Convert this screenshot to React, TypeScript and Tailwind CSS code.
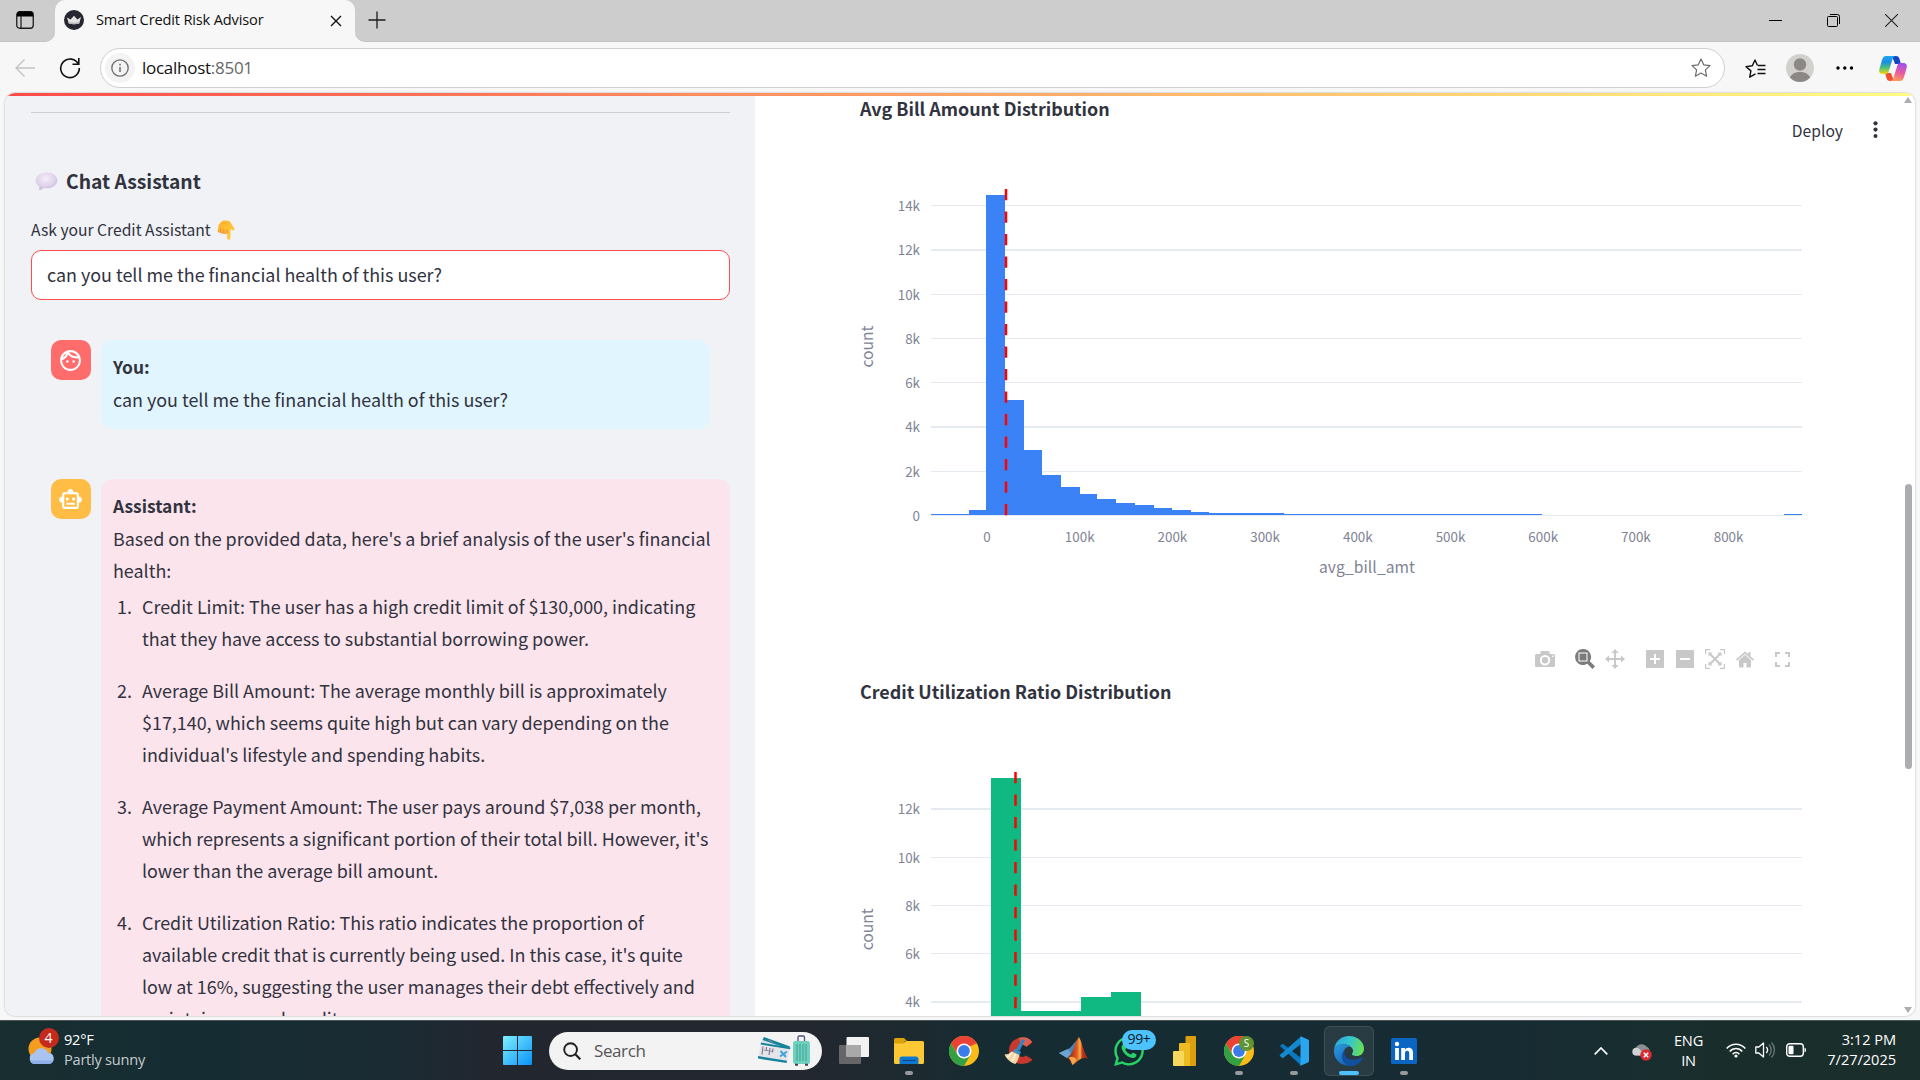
import React from "react";
import { MdOutlineFace, MdOutlineSmartToy } from "react-icons/md";
import { FaWhatsapp } from "react-icons/fa";

const ITEMS: string[][] = [
  ["Credit Limit: The user has a high credit limit of $130,000, indicating", "that they have access to substantial borrowing power."],
  ["Average Bill Amount: The average monthly bill is approximately", "$17,140, which seems quite high but can vary depending on the", "individual's lifestyle and spending habits."],
  ["Average Payment Amount: The user pays around $7,038 per month,", "which represents a significant portion of their total bill. However, it's", "lower than the average bill amount."],
  ["Credit Utilization Ratio: This ratio indicates the proportion of", "available credit that is currently being used. In this case, it's quite", "low at 16%, suggesting the user manages their debt effectively and", "maintains a good credit score."],
];

/* ---------- Browser chrome ---------- */

function TabStrip() {
  return (
    <div className="flex h-[42px] shrink-0 bg-[#f7f7f7] font-['Open_Sans',sans-serif]">
      <div className="flex w-[55px] items-center rounded-br-[10px] border-b border-[#c4c4c4] bg-[#cdcdcd] pl-4">
        <svg width="18" height="18" viewBox="0 0 18 18" className="mt-[-1px]">
          <rect x="0.75" y="0.75" width="16.5" height="16.5" rx="3" fill="#cdcdcd" stroke="#1b1b1b" strokeWidth="1.3" />
          <path d="M1 5.5V3.5a3 3 0 0 1 3-3h10a3 3 0 0 1 3 3v2z" fill="#000" />
          <path d="M5 5v12" stroke="#1b1b1b" strokeWidth="1.2" />
        </svg>
      </div>
      <div className="bg-[#cdcdcd]">
        <div className="flex h-[42px] w-[300px] items-center rounded-t-[10px] bg-[#f7f7f7] pl-[9px]">
          <svg width="20" height="20" viewBox="0 0 20 20" className="mt-[-2px]">
            <circle cx="10" cy="10" r="10" fill="#262730" />
            <path d="M3 7.5l3.6 2L10 5.8l3.4 3.7L17 7l-1.8 6.6c-3 1-7.400 1-10.400 0z" fill="#e3e3e3" />
            <path d="M4.300 11.800c3.500 1.200 8 1.200 11.400 0l-.5 1.800c-3 1-7.400 1-10.400 0z" fill="#b9b9bd" />
          </svg>
          <span className="mt-[-3px] ml-3 w-[170px] whitespace-nowrap text-[14.6px] tracking-[-0.16px] text-[#111]">Smart Credit Risk Advisor</span>
          <svg width="12" height="12" viewBox="0 0 12 12" className="mt-[-1px] ml-[64px]">
            <path d="M1 1l10 10M11 1L1 11" stroke="#111" strokeWidth="1.4" />
          </svg>
        </div>
      </div>
      <div className="flex grow items-center rounded-bl-[10px] border-b border-[#c4c4c4] bg-[#cdcdcd] pl-[13px]">
        <svg width="18" height="18" viewBox="0 0 18 18" className="mt-[-2px]">
          <path d="M9 0.500v17M0.500 9h17" stroke="#1b1b1b" strokeWidth="1.300" />
        </svg>
        <div className="ml-auto flex items-center pr-[22px]">
          <svg width="13" height="13" viewBox="0 0 13 13">
            <path d="M0 6.500h13" stroke="#000" strokeWidth="1" />
          </svg>
          <svg width="13" height="13" viewBox="0 0 13 13" className="ml-[45px]">
            <rect x="0.500" y="2.500" width="10" height="10" rx="1" fill="none" stroke="#000" />
            <path d="M3 .500h7.500a2 2 0 0 1 2 2V10" fill="none" stroke="#000" />
          </svg>
          <svg width="13" height="13" viewBox="0 0 13 13" className="ml-[45px]">
            <path d="M0 0l13 13M13 0L0 13" stroke="#222" strokeWidth="1.100" />
          </svg>
        </div>
      </div>
    </div>
  );
}

function CopilotLogo() {
  return (
    <svg width="28" height="27" viewBox="0 0 28 27">
      <defs>
        <linearGradient id="cpA" x1="0" y1="0" x2="0" y2="1">
          <stop offset="0" stopColor="#1ca8f0" />
          <stop offset="0.350" stopColor="#1b8fe0" />
          <stop offset="0.650" stopColor="#4fbf7a" />
          <stop offset="1" stopColor="#f2d713" />
        </linearGradient>
        <linearGradient id="cpB" x1="0.600" y1="0" x2="0.300" y2="1">
          <stop offset="0" stopColor="#a24ff0" />
          <stop offset="0.500" stopColor="#ea5c9c" />
          <stop offset="1" stopColor="#ffa05a" />
        </linearGradient>
      </defs>
      <path d="M13 1h4c2 0 3 1 3.500 3L22 9h-6z" fill="#1447c4" />
      <path d="M15 26h-4c-2 0-3-1-3.500-3L6 18h6z" fill="#f0502e" />
      <path d="M7 1h10c-2 0-3 1.500-3.600 3.500L10 15.500C9.300 18 8.400 19 6 19H3.500C.5 19-.3 16.800.4 14L3 5C3.800 2.300 5 1 7 1z" fill="url(#cpA)" />
      <path d="M21 26H11c2 0 3-1.500 3.600-3.500L18 11.500C18.700 9 19.600 8 22 8h2.500c3 0 3.800 2.200 3.100 5L25 22c-.8 2.700-2 4-4 4z" fill="url(#cpB)" />
    </svg>
  );
}

const STAR = "M10 1l2.700 5.800 6.300.8-4.600 4.300 1.200 6.300L10 15.100l-5.600 3.100 1.200-6.300L1 7.600l6.300-.8z";

function Toolbar() {
  return (
    <div className="flex h-[51px] shrink-0 items-start bg-[#f7f7f7] pt-[6px] font-['Open_Sans',sans-serif]">
      <svg width="20" height="18" viewBox="0 0 20 18" className="mt-[11px] ml-[15px]">
        <path d="M20 9H1M9.500 .500L1 9l8.500 8.500" fill="none" stroke="#c2c2c2" strokeWidth="1.300" />
      </svg>
      <svg width="22" height="22" viewBox="0 0 22 22" className="mt-[9px] ml-[24px]">
        <path d="M19.500 7.500A9.300 9.300 0 1 0 20.300 11" fill="none" stroke="#111" strokeWidth="1.600" />
        <path d="M19.800 1v6.300h-6.300" fill="none" stroke="#111" strokeWidth="1.600" />
      </svg>
      <div className="ml-[19px] flex h-10 w-[1625px] items-center rounded-full border border-[#cfcfcf] bg-white pr-[13px] pl-1">
        <div className="flex size-[30px] items-center justify-center rounded-full bg-[#f3f3f3]">
          <svg width="18" height="18" viewBox="0 0 18 18">
            <circle cx="9" cy="9" r="8.200" fill="none" stroke="#6b6b6b" strokeWidth="1.300" />
            <path d="M9 8v5M9 4.800v1.600" stroke="#6b6b6b" strokeWidth="1.500" />
          </svg>
        </div>
        <span className="mt-[-1px] ml-[7px] text-[17px] tracking-[-0.27px] text-[#111]">
          localhost<span className="text-[#666]">:8501</span>
        </span>
        <svg width="20" height="20" viewBox="0 0 20 20" className="ml-auto">
          <path d={STAR} fill="none" stroke="#6b6b6b" strokeWidth="1.200" strokeLinejoin="round" />
        </svg>
      </div>
      <svg width="21" height="20" viewBox="0 0 21 20" className="mt-[11px] ml-[20px]">
        <path d="M10.500 14.800l-5.800 3.400 1.200-6.300L1 7.600l6.300-.8L10 1l2.500 5.500" fill="none" stroke="#111" strokeWidth="1.400" strokeLinejoin="round" />
        <path d="M13 6.500h7.500M12.500 10.500h8M12.500 14.500h8" stroke="#111" strokeWidth="1.300" />
      </svg>
      <svg width="28" height="28" viewBox="0 0 28 28" className="mt-[6px] ml-5">
        <circle cx="14" cy="14" r="14" fill="#d3d1ce" />
        <circle cx="14" cy="10.500" r="6.200" fill="#8c8885" />
        <path d="M4 23.700c1.500-4 5.500-5.700 10-5.700s8.500 1.700 10 5.700A14 14 0 0 1 4 23.700z" fill="#8c8885" />
      </svg>
      <svg width="18" height="4" viewBox="0 0 18 4" className="mt-[18px] ml-[22px]">
        <circle cx="2" cy="2" r="1.700" />
        <circle cx="8.800" cy="2" r="1.700" />
        <circle cx="15.500" cy="2" r="1.700" />
      </svg>
      <div className="mt-[7px] ml-[25px]">
        <CopilotLogo />
      </div>
    </div>
  );
}

/* ---------- Sidebar ---------- */

function SpeechBubble() {
  return (
    <svg width="23" height="19" viewBox="0 0 23 19">
      <defs>
        <radialGradient id="bub" cx="0.450" cy="0.350" r="0.750">
          <stop offset="0" stopColor="#f3eef8" />
          <stop offset="0.600" stopColor="#ddd2ea" />
          <stop offset="1" stopColor="#b7a3d3" />
        </radialGradient>
      </defs>
      <path d="M11.500 0.500c6 0 10.800 3.500 10.800 8 0 4.300-4.800 7.800-10.800 7.800-1 0-2-.1-3-.3-1.400 1.300-3 2-4.500 2 .5-1.200.6-2.500.2-3.600C2 13 .7 10.900 .7 8.500c0-4.500 4.800-8 10.800-8z" fill="url(#bub)" />
    </svg>
  );
}

function PointDown() {
  return (
    <svg width="18" height="20" viewBox="0 0 18 20">
      <defs>
        <linearGradient id="hand" x1="0" y1="0" x2="1" y2="1">
          <stop offset="0" stopColor="#ffb02e" />
          <stop offset="1" stopColor="#ffcf3d" />
        </linearGradient>
      </defs>
      <path d="M3.500 2.500C5 .8 6.500 .5 9 .5c3 0 4.500 1 5.500 3.500l2.800 4.500c.8 1.300-.3 2.300-1.500 1.700L13.500 9v9a1.700 1.700 0 0 1-3.400 0v-5.500c-.6 1.700-2.800 1.700-3.200.2-.7 1.300-2.800 1-3-.6C2.400 12.800.8 12 .9 10.300 1 7 1.500 4.500 3.500 2.500z" fill="url(#hand)" />
      <path d="M3.900 12V8.500M6.900 12.500V9M10.100 12.500V9.500" stroke="#e8833a" strokeWidth="1" />
      <path d="M1 10.500c.3 2 2.300 2.300 2.900 1.500.4 1.500 2.300 1.900 3 .7.500 1.300 2.600 1.400 3.200-.2" fill="none" stroke="#f08a3c" strokeWidth="1" />
    </svg>
  );
}

function Sidebar() {
  return (
    <aside className="flex w-[750px] shrink-0 flex-col bg-[#f0f2f6] pr-[25px] pl-[26px] text-[17.920px] leading-8 text-[#31333f]">
      <div className="mt-[19px] h-px shrink-0 bg-[#cdcfd5]" />
      <div className="mt-[52px] flex h-8 shrink-0 items-center pl-[4px]">
        <SpeechBubble />
        <h3 className="ml-[8px] whitespace-nowrap text-[19.300px] font-bold">Chat Assistant</h3>
      </div>
      <div className="mt-[19px] flex h-7 shrink-0 items-center">
        <span className="whitespace-nowrap text-[15.670px] leading-7">Ask your Credit Assistant</span>
        <span className="ml-[6px]"><PointDown /></span>
      </div>
      <div className="mt-[6px] flex h-[50px] shrink-0 items-center rounded-[10px] border border-[#ff4b4b] bg-white pl-[15px]">
        <span className="mt-[-2px] whitespace-nowrap">can you tell me the financial health of this user?</span>
      </div>

      <div className="mt-10 flex shrink-0 items-start gap-[10px] pr-5 pl-5">
        <div className="flex size-10 shrink-0 items-center justify-center rounded-[10px] bg-[#ff6c6c] pr-px text-white">
          <MdOutlineFace size={25} />
        </div>
        <div className="h-[89px] grow rounded-[12px] bg-[#e1f5fe] pt-[11px] pl-3">
          <p className="text-[17.400px] font-bold">You:</p>
          <p>can you tell me the financial health of this user?</p>
        </div>
      </div>

      <div className="mt-[50px] flex shrink-0 items-start gap-[10px] pl-5">
        <div className="flex size-10 shrink-0 items-center justify-center rounded-[10px] bg-[#ffbd45] pr-px text-white">
          <MdOutlineSmartToy size={25} />
        </div>
        <div className="grow rounded-[12px] bg-[#fce4ec] pt-[11px] pl-3">
          <p className="text-[17.400px] font-bold">Assistant:</p>
          <p className="whitespace-nowrap">Based on the provided data, here's a brief analysis of the user's financial</p>
          <p>health:</p>
          <ol className="mt-1 flex flex-col gap-5">
            {ITEMS.map((lines, i) => (
              <li key={i} className="flex">
                <span className="w-[29px] shrink-0 pl-[4px]">{i + 1}.</span>
                <div className="whitespace-nowrap">
                  {lines.map((l) => (
                    <p key={l}>{l}</p>
                  ))}
                </div>
              </li>
            ))}
          </ol>
        </div>
      </div>
    </aside>
  );
}

/* ---------- Charts ---------- */

type Tick = { at: number; label: string };
type Bar = { x0: number; x1: number; top: number };

const BILL_Y: Tick[] = [
  { at: 205.500, label: "14k" },
  { at: 250, label: "12k" },
  { at: 294.500, label: "10k" },
  { at: 338.500, label: "8k" },
  { at: 382.500, label: "6k" },
  { at: 427, label: "4k" },
  { at: 471.500, label: "2k" },
  { at: 515.500, label: "0" },
];
const BILL_X = ["0", "100k", "200k", "300k", "400k", "500k", "600k", "700k", "800k"];
const BILL_BARS: Bar[] = [
  { x0: 931, x1: 969, top: 514 },
  { x0: 969, x1: 986, top: 510 },
  { x0: 986, x1: 1005, top: 195 },
  { x0: 1005, x1: 1024, top: 400 },
  { x0: 1024, x1: 1042, top: 450 },
  { x0: 1042, x1: 1061, top: 475 },
  { x0: 1061, x1: 1080, top: 487 },
  { x0: 1080, x1: 1097, top: 494 },
  { x0: 1097, x1: 1116, top: 499 },
  { x0: 1116, x1: 1135, top: 503 },
  { x0: 1135, x1: 1154, top: 505 },
  { x0: 1154, x1: 1172, top: 508 },
  { x0: 1172, x1: 1191, top: 510 },
  { x0: 1191, x1: 1209, top: 512 },
  { x0: 1209, x1: 1284, top: 513 },
  { x0: 1284, x1: 1542, top: 514 },
  { x0: 1784, x1: 1802, top: 514 },
];
const RATIO_Y: Tick[] = [
  { at: 809, label: "12k" },
  { at: 857.500, label: "10k" },
  { at: 905.500, label: "8k" },
  { at: 953.500, label: "6k" },
  { at: 1002, label: "4k" },
];
const RATIO_BARS: Bar[] = [
  { x0: 991, x1: 1021, top: 778 },
  { x0: 1021, x1: 1081, top: 1011 },
  { x0: 1081, x1: 1111, top: 997 },
  { x0: 1111, x1: 1141, top: 992 },
];

function Grid({ ticks }: { ticks: Tick[] }) {
  return (
    <>
      {ticks.map((t) => (
        <g key={t.label}>
          <path d={`M931 ${t.at}H1802`} stroke="#e6eaf1" strokeWidth={t.at % 1 ? 1 : 2} />
          <text x="920" y={t.at + 5.300} textAnchor="end" fontSize="13.400" fill="#808495">{t.label}</text>
        </g>
      ))}
    </>
  );
}

function Bars({ bars, bottom, fill }: { bars: Bar[]; bottom: number; fill: string }) {
  return (
    <>
      {bars.map((b) => (
        <rect key={b.x0} x={b.x0} y={b.top} width={b.x1 - b.x0} height={bottom - b.top} fill={fill} shapeRendering="crispEdges" />
      ))}
    </>
  );
}

function ModeBar() {
  return (
    <div className="flex h-5 items-center pl-[675px] text-[#c8c8c8]">
      <svg width="20" height="16" viewBox="0 0 20 16" fill="currentColor">
        <path fillRule="evenodd" d="M1.500 3H5l1-3h8l1 3h3.500A1.500 1.500 0 0 1 20 4.500v10a1.500 1.500 0 0 1-1.500 1.500h-17A1.500 1.500 0 0 1 0 14.500v-10A1.500 1.500 0 0 1 1.500 3zM10 4a5.200 5.200 0 1 0 0 10.400A5.200 5.200 0 0 0 10 4zm0 2a3.200 3.200 0 1 1 0 6.400A3.200 3.200 0 0 1 10 6zm7-1.500v1.500h1.500V4.500z" />
      </svg>
      <svg width="20" height="20" viewBox="0 0 20 20" className="ml-5 text-[#7c7c7c]" fill="currentColor">
        <path fillRule="evenodd" d="M8 0a8 8 0 0 1 6.800 12.300l5.200 5-2.500 2.700-5.200-5.200A8 8 0 1 1 8 0zM3.500 3.500v9h9v-9zm1 1h7v7h-7z" />
        <rect x="5.200" y="5.200" width="5.600" height="5.600" />
      </svg>
      <svg width="20" height="20" viewBox="0 0 20 20" className="ml-[10px]" fill="currentColor">
        <path d="M10 0l3.600 4H11v5h5V6.400l4 3.600-4 3.600V11h-5v5h2.600L10 20l-3.600-4H9v-5H4v2.600L0 10l4-3.600V9h5V4H6.400z" />
      </svg>
      <svg width="18" height="18" viewBox="0 0 18 18" className="ml-[21px]">
        <rect width="18" height="18" fill="currentColor" />
        <path d="M9 4v10M4 9h10" stroke="#fff" strokeWidth="2" />
      </svg>
      <svg width="18" height="18" viewBox="0 0 18 18" className="ml-3">
        <rect width="18" height="18" fill="currentColor" />
        <path d="M4 9h10" stroke="#fff" strokeWidth="2" />
      </svg>
      <svg width="20" height="20" viewBox="0 0 20 20" className="ml-[11px]" fill="none" stroke="currentColor">
        <path d="M.600 5V.600H5M15 .600h4.400V5M19.400 15v4.400H15M5 19.400H.600V15" strokeWidth="1.200" />
        <path d="M5 5l10 10M15 5L5 15" strokeWidth="2" />
        <path d="M3.500 3.500h4l-4 4zM16.500 3.500v4l-4-4zM16.500 16.500h-4l4-4zM3.500 16.500v-4l4 4z" fill="currentColor" stroke="none" />
      </svg>
      <svg width="18" height="17" viewBox="0 0 18 17" className="ml-[11px]" fill="currentColor">
        <path d="M9 3.800l6 5.400V15.500a1 1 0 0 1-1 1h-3.500V12h-3v4.500H4a1 1 0 0 1-1-1V9.200z" />
        <path d="M9 .400l3.200 2.900V1.300h2.300v4l3.500 3.200-1.200 1.300L9 2.800 1.200 9.800 0 8.500z" />
      </svg>
      <svg width="15" height="15" viewBox="0 0 15 15" className="ml-[21px]" fill="none" stroke="currentColor" strokeWidth="2">
        <path d="M1 5V1h4M10 1h4v4M14 10v4h-4M5 14H1v-4" />
      </svg>
    </div>
  );
}

function Main() {
  return (
    <main className="relative flex grow flex-col bg-white pl-[105px] text-[#31333f]">
      <h4 className="h-8 shrink-0 whitespace-nowrap text-[17.920px] leading-[30px] font-bold">Avg Bill Amount Distribution</h4>
      <svg width="942" height="410" viewBox="860 180 942 410" className="mt-[55px] shrink-0 overflow-visible">
        <Grid ticks={BILL_Y} />
        <Bars bars={BILL_BARS} bottom={515} fill="#3b82f6" />
        <path d="M1006 189V516" stroke="#f00" strokeWidth="2.500" strokeDasharray="11.250 11.250" />
        {BILL_X.map((l, i) => (
          <text key={l} x={987 + i * 92.700} y="542" textAnchor="middle" fontSize="13.400" fill="#808495">{l}</text>
        ))}
        <text x="1367" y="573" textAnchor="middle" fontSize="15.650" textLength="96" fill="#808495">avg_bill_amt</text>
        <text transform="translate(872.500 346.500) rotate(-90)" textAnchor="middle" fontSize="15.650" textLength="42" fill="#808495">count</text>
      </svg>
      <div className="mt-[59px] shrink-0">
        <ModeBar />
      </div>
      <h4 className="mt-[6px] h-8 shrink-0 whitespace-nowrap text-[17.930px] leading-8 font-bold">Credit Utilization Ratio Distribution</h4>
      <svg width="942" height="256" viewBox="860 760 942 256" className="mt-[53px] shrink-0 overflow-visible">
        <Grid ticks={RATIO_Y} />
        <Bars bars={RATIO_BARS} bottom={1016} fill="#10b981" />
        <path d="M1015.500 772V1016" stroke="#f00" strokeWidth="2.500" strokeDasharray="11.250 11.250" />
        <text transform="translate(872.500 929.300) rotate(-90)" textAnchor="middle" fontSize="15.650" textLength="42" fill="#808495">count</text>
      </svg>

      <div className="absolute top-[24px] right-[37px] flex items-center gap-[30px]">
        <span className="text-[15.650px] leading-7">Deploy</span>
        <svg width="5" height="17" viewBox="0 0 5 17" fill="#31333f" className="mt-[-3px]">
          <circle cx="2.500" cy="2.300" r="2.100" />
          <circle cx="2.500" cy="8.600" r="2.100" />
          <circle cx="2.500" cy="15" r="2" />
        </svg>
      </div>
      <div className="absolute top-0 right-0 bottom-0 flex w-[14px] flex-col items-center pt-[4px]">
        <svg width="8" height="6" viewBox="0 0 8 6"><path d="M4 0l4 6H0z" fill="#acacb3" /></svg>
        <div className="mt-[381px] h-[285px] w-[7px] rounded-full bg-[#acacb3]" />
        <svg width="8" height="6" viewBox="0 0 8 6" className="mt-auto mb-[3px]"><path d="M0 0h8L4 6z" fill="#acacb3" /></svg>
      </div>
    </main>
  );
}

/* ---------- Taskbar ---------- */

function Slot({ children, run, active }: { children: React.ReactNode; run?: boolean; active?: boolean }) {
  return (
    <div className="flex w-[55px] shrink-0 justify-center">
      <div className={`relative flex h-[50px] w-[50px] items-center justify-center rounded-[6px] ${active ? "border border-white/10 bg-white/8" : ""}`}>
        {children}
        {run && <div className={`absolute h-1 rounded-full ${active ? "bottom-0 w-5 bg-[#4cc2ff]" : "bottom-[1px] w-2 bg-[#969a9e]"}`} />}
      </div>
    </div>
  );
}

function Chrome() {
  return (
    <svg width="30" height="30" viewBox="0 0 30 30">
      <circle cx="15" cy="15" r="15" fill="#fbbc1a" />
      <path d="M2 7.500A15 15 0 0 1 28 7.500L15 8.500 9 19z" fill="#ea4335" />
      <path d="M2 7.500A15 15 0 0 0 15 30L21.500 18.700 15 22.500 8.500 18.700z" fill="#34a044" />
      <path d="M28 7.500H15v5z" fill="#ea4335" />
      <circle cx="15" cy="15" r="7.500" fill="#fff" />
      <circle cx="15" cy="15" r="5.900" fill="#3b7de8" />
    </svg>
  );
}

function CCleaner() {
  return (
    <svg width="30" height="28" viewBox="0 0 30 28">
      <path d="M28.500 5.500L22.500 10c-3-3.600-9.500-2-9.500 4 0 5.500 5.500 7.500 9 4.500l6.500 4C24 29 5 30 5 14 5 -1 23-3 28.500 5.500z" fill="#c8382c" />
      <path d="M28 5L22 9.500c-1.500-1.600-3.500-2-5-1.500L15 1c5-1.500 10-.5 13 4z" fill="#e0604f" />
      <path d="M18 2l3 1-5.500 11-3.500-1.500z" fill="#2f86c6" />
      <path d="M11 12l6 3-1.500 3-7-3.500z" fill="#3d8fca" />
      <path d="M8 14.500l7.500 3.500c-1 4-2 6.500-4 9C7 26 2.500 22 .5 17.500c3 0 5.500-1 7.500-3z" fill="#f0d6a8" />
      <path d="M8 15c-1.500 3.500-3 4.500-5 5.500M11.500 17c-1 4-2.500 6-4 7.500" stroke="#fff2d6" strokeWidth="1.500" fill="none" />
    </svg>
  );
}

function Matlab() {
  return (
    <svg width="30" height="28" viewBox="0 0 30 28">
      <defs>
        <linearGradient id="ml" x1="0" y1="0" x2="1" y2="0">
          <stop offset="0" stopColor="#7c1f14" />
          <stop offset="0.450" stopColor="#e2591f" />
          <stop offset="0.600" stopColor="#f9b04a" />
          <stop offset="0.700" stopColor="#c43a1c" />
          <stop offset="1" stopColor="#8a2415" />
        </linearGradient>
      </defs>
      <path d="M0 16l9-4c3-1 5-5 9-9l-4 13-6 5z" fill="#4a86c0" />
      <path d="M0 16l9-4 3 5-4 4z" fill="#6fa3cf" />
      <path d="M20 0c3 5 5 17 9.500 22-4-2-7-1-9.500 1-2.500 2-4.500 4.500-7 5-1-3-2.500-5-4.500-7C14 18 16 4 20 0z" fill="url(#ml)" />
      <path d="M9 21c2 0 3 3 4.500 7 2-1.500 4-4 4.500-5-3-4-6-4-9-2z" fill="#f3a54a" />
    </svg>
  );
}

function Vscode() {
  return (
    <svg width="30" height="30" viewBox="0 0 30 30">
      <path d="M1 10l2-1.700c.5-.400 1-.400 1.500 0L22 22v7.500z" fill="#0b78c2" />
      <path d="M1 20l2 1.700c.5.400 1 .4 1.500 0L22 8V.500L1 18.800c-.5.400-.5.800 0 1.200z" fill="#1489cf" />
      <path d="M21.500 .200L29 3.500c.7.300 1 .8 1 1.500v20c0 .7-.3 1.200-1 1.500l-7.500 3.300c-.6.300-1 .2-1.500-.3l1.500.500V.200z" fill="#2ba5ee" />
    </svg>
  );
}

function Edge() {
  return (
    <svg width="30" height="30" viewBox="0 0 30 30">
      <defs>
        <linearGradient id="edTop" x1="0" y1="0.300" x2="1" y2="0.500">
          <stop offset="0" stopColor="#2aa5dc" />
          <stop offset="0.500" stopColor="#35c6cf" />
          <stop offset="1" stopColor="#6be052" />
        </linearGradient>
        <linearGradient id="edLow" x1="0" y1="0" x2="0.700" y2="1">
          <stop offset="0" stopColor="#2a9be0" />
          <stop offset="1" stopColor="#1560b4" />
        </linearGradient>
      </defs>
      <path d="M0 14C1 5 7.500 0 15 0c8.500 0 15 6 15 12.500 0 5-3.500 7.500-7.500 7.500-3.500 0-5-1.200-4.500-2.200 1.500-2 1.500-4.300-.500-6.300C12 6 3 8 0 14z" fill="url(#edTop)" />
      <path d="M0 14c2.500-6 12-7.500 16.500-3.500-5-.500-7.500 4-6.500 8.500 1.300 6 7 9.500 11 9.500C12 33-1 26 0 14z" fill="url(#edLow)" />
      <path d="M10.500 14c-1.500 8 6 13 17 7.500.8-.4 1.400.2 1 .9C26 27.500 21 30 16 30c-8-1-10.500-11-5.500-16z" fill="#10509f" />
    </svg>
  );
}

function Travel() {
  return (
    <svg width="54" height="31" viewBox="0 0 54 31">
      <path d="M6.500 2l26 9-4 9L4 8z" fill="#dfe3ea" />
      <path d="M7 2l26 9.500-.8 2.500L5.500 5z" fill="#15839a" />
      <path d="M4 8.500l29 5-3.500 14L1 23z" fill="#e4e5ea" />
      <path d="M4 7.500l29.500 5-.4 1.800L3.600 9.500zM1 21l29 4.800-.4 2.200L1 23.500z" fill="#15839a" />
      <path d="M6 11.500l-1 8M9.500 12l-.3 4M13 13l-1 7M16 13.500l-.5 4" stroke="#7d728c" strokeWidth="1.100" />
      <path d="M7 15l9 1.500M11 5l5 2" stroke="#8f87a0" strokeWidth="0.900" />
      <path d="M23.500 16l5.500 6M30 16.500l-7 5" stroke="#3fa4d8" strokeWidth="2" />
      <path d="M41 6V2.500c0-.8.500-1.500 1.300-1.500h4c.8 0 1.200.7 1.200 1.500V6" fill="none" stroke="#4b4f7a" strokeWidth="1.300" />
      <rect x="36" y="6" width="17" height="23" rx="2.500" fill="#6fd0be" />
      <path d="M40 9v17M43 9v17M46 9v17M49 9v17" stroke="#3d9f92" strokeWidth="1" />
      <path d="M38 29.800h3M48 29.800h3" stroke="#4b3d52" strokeWidth="2" />
    </svg>
  );
}

function Taskbar() {
  return (
    <footer className="flex h-[60px] shrink-0 items-center border-t border-[#4a5558] bg-[linear-gradient(90deg,#182e30_0%,#152c33_10%,#1a2b33_20%,#22262f_26%,#23272f_42%,#1c2a30_48%,#152c33_52%,#172b33_78%,#182d30_84%,#192e2b_90%,#1a2e2b_100%)] font-['Open_Sans',sans-serif] text-[14.600px] leading-5 text-white">
      <div className="relative ml-[28px] h-[30px] w-[28px]">
        <svg width="28" height="28" viewBox="0 0 28 28" className="mt-px">
          <circle cx="12" cy="12" r="11.500" fill="#f39c1f" />
          <path d="M7 27a5.500 5.500 0 0 1-.8-10.900 7.500 7.500 0 0 1 14-.3A5.700 5.700 0 0 1 21.500 27z" fill="#a9c4f0" />
          <path d="M7 27a5 5 0 0 1-4.500-3.500h23A5.500 5.500 0 0 1 21.500 27z" fill="#8db0e8" />
        </svg>
        <div className="absolute top-[-8px] left-[10.500px] flex size-5 items-center justify-center rounded-full bg-[#c42b1c] text-[14px]">4</div>
      </div>
      <div className="mt-[-4px] ml-2 w-[90px] whitespace-nowrap tracking-[-0.250px]">
        <p>92°F</p>
        <p className="text-[#c5cbce]">Partly sunny</p>
      </div>

      <svg width="29" height="29" viewBox="0 0 29 29" className="ml-[349px]">
        <defs>
          <linearGradient id="win" x1="0" y1="0" x2="1" y2="1">
            <stop offset="0" stopColor="#7df0ff" />
            <stop offset="1" stopColor="#0a91f8" />
          </linearGradient>
        </defs>
        <path d="M1 0h13v14H0V1a1 1 0 0 1 1-1zM15 0h13a1 1 0 0 1 1 1v13H15zM0 15h14v14H1a1 1 0 0 1-1-1zM15 15h14v13a1 1 0 0 1-1 1H15z" fill="url(#win)" />
      </svg>
      <div className="ml-[17px] flex h-[38px] w-[273px] shrink-0 items-center rounded-full bg-[#f3f3f3] pl-[14px]">
        <svg width="18" height="18" viewBox="0 0 18 18">
          <circle cx="7.600" cy="7.600" r="6.400" fill="none" stroke="#1f1f1f" strokeWidth="1.900" />
          <path d="M12.300 12.300l5 5" stroke="#1f1f1f" strokeWidth="2.200" />
        </svg>
        <span className="ml-[13px] text-[17px] tracking-[-0.400px] text-[#555]">Search</span>
        <div className="mr-[11px] ml-auto"><Travel /></div>
      </div>
      <div className="ml-[4.500px] flex">
        <Slot>
          <svg width="30" height="27" viewBox="0 0 30 27">
            <rect x="0" y="8" width="22" height="19" rx="1" fill="#666668" />
            <rect x="7.500" y="0" width="22.500" height="20" rx="1" fill="#f2f2f2" />
            <rect x="7.500" y="8" width="14.500" height="12" fill="#a9a9aa" />
          </svg>
        </Slot>
        <Slot run>
          <svg width="30" height="26" viewBox="0 0 30 26">
            <path d="M0 1.500A1.500 1.500 0 0 1 1.500 0H10l3 3h-2L9 6H0z" fill="#e0a108" />
            <path d="M0 5.500h9L12 3h16.500A1.500 1.500 0 0 1 30 4.500v20a1.500 1.500 0 0 1-1.500 1.500h-27A1.500 1.500 0 0 1 0 24.500z" fill="#fcc934" />
            <path d="M5.500 26v-5a2.500 2.500 0 0 1 2.500-2.500h14a2.500 2.500 0 0 1 2.500 2.500v5z" fill="#0f78d0" />
            <path d="M8.500 22.500h13" stroke="#0a4a8c" strokeWidth="1.200" />
          </svg>
        </Slot>
        <Slot><Chrome /></Slot>
        <Slot><CCleaner /></Slot>
        <Slot><Matlab /></Slot>
        <Slot>
          <FaWhatsapp size={34} color="#25d366" />
          <div className="absolute top-[4px] left-[18px] flex h-5 w-[34px] items-center justify-center rounded-full bg-[#4cc2ff] pb-px text-[14px] tracking-[-0.300px] text-[#0b1a22]">99+</div>
        </Slot>
        <Slot>
          <svg width="23" height="30" viewBox="0 0 23 30">
            <path d="M12.500 1a1 1 0 0 1 1-1H22a1 1 0 0 1 1 1v28a1 1 0 0 1-1 1h-9.500z" fill="#dd9f10" />
            <path d="M6 8a1 1 0 0 1 1-1h9a1 1 0 0 1 1 1v22H6z" fill="#efbb22" />
            <path d="M0 16a1 1 0 0 1 1-1h9a1 1 0 0 1 1 1v14H1a1 1 0 0 1-1-1z" fill="#f6d95c" />
          </svg>
        </Slot>
        <Slot run>
          <Chrome />
          <div className="absolute top-[10px] left-[25px] flex size-[15px] items-center justify-center rounded-full bg-[#5f9432] text-[10px] text-white">S</div>
        </Slot>
        <Slot run><Vscode /></Slot>
        <Slot run active><Edge /></Slot>
        <Slot run>
          <svg width="26" height="26" viewBox="0 0 26 26">
            <rect width="26" height="26" rx="1.500" fill="#0a66c2" />
            <circle cx="6" cy="6" r="2.200" fill="#fff" />
            <path d="M4.100 10h3.800v12H4.100zM10.200 10h3.600v1.700c.7-1.200 2-2 3.700-2 3.700 0 4.500 2.400 4.500 5.600V22h-3.800v-6c0-1.500-.1-3.200-2-3.200s-2.200 1.500-2.200 3.100V22h-3.800z" fill="#fff" />
          </svg>
        </Slot>
      </div>

      <div className="ml-auto flex items-center pr-6">
        <svg width="14" height="8" viewBox="0 0 14 8" fill="none" stroke="#fff" strokeWidth="1.700">
          <path d="M.700 7.300L7 1l6.300 6.300" />
        </svg>
        <svg width="21" height="18" viewBox="0 0 21 18" className="mt-[3px] ml-[23px]">
          <path d="M5 12.500a4.500 4.500 0 0 1 0-8A6.500 6.500 0 0 1 16 4c2 .500 3 3 2 5l-6 3.500z" fill="#8b9190" />
          <path d="M4 12.500a4 4 0 0 1 .5-7.700c2-.500 4 .700 5.500 3.200l3 4.500z" fill="#cfd3d3" />
          <circle cx="15" cy="12" r="5.800" fill="#d92b34" />
          <path d="M12.800 9.800l4.400 4.400M17.200 9.800l-4.400 4.400" stroke="#fff" strokeWidth="1.500" />
        </svg>
        <div className="mt-[-2px] ml-[21px] w-[31px] text-center tracking-[-0.200px]">
          <p>ENG</p>
          <p>IN</p>
        </div>
        <svg width="20" height="15" viewBox="0 0 20 15" className="mt-[-1px] ml-[22px]" fill="none" stroke="#fff" strokeWidth="1.500">
          <path d="M.700 5.500c5-5.800 13.600-5.800 18.600 0M3.700 8.500c3.500-4 9.100-4 12.600 0M6.600 11.200c2-2.200 4.800-2.200 6.800 0" />
          <circle cx="10" cy="13" r="1.600" fill="#fff" stroke="none" />
        </svg>
        <svg width="21" height="18" viewBox="0 0 21 18" className="mt-[-1px] ml-[9px]" fill="none" stroke="#fff" strokeWidth="1.300">
          <path d="M.800 6h3L8.500 2v14L3.800 12h-3z" strokeLinejoin="round" />
          <path d="M11.300 6a4.500 4.500 0 0 1 0 6" />
          <path d="M14 3.500a8 8 0 0 1 0 11M16.500 1.500a11 11 0 0 1 0 15" stroke="#6b7876" />
        </svg>
        <svg width="20" height="14" viewBox="0 0 20 14" className="mt-[-1px] ml-[10px]">
          <rect x=".700" y=".700" width="16.600" height="12.600" rx="3" fill="none" stroke="#fff" strokeWidth="1.400" />
          <rect x="2.500" y="2.700" width="5" height="8.600" rx="1" fill="#fff" />
          <path d="M18.500 4.500c1 .500 1.500 1.300 1.500 2.500s-.500 2-1.500 2.500z" fill="#fff" />
        </svg>
        <div className="mt-[-4px] ml-[17px] w-[73px] text-right tracking-[-0.050px]">
          <p>3:12 PM</p>
          <p>7/27/2025</p>
        </div>
      </div>
    </footer>
  );
}

export default function App() {
  return (
    <div className="flex h-[1080px] w-[1920px] flex-col overflow-hidden bg-[#f7f7f7]">
      <TabStrip />
      <Toolbar />
      <div className="relative mx-[5px] mb-1 flex h-[923px] shrink-0 overflow-hidden rounded-[10px] font-['Noto_Sans_CJK_SC',sans-serif] shadow-[0_0_2px_rgba(0,0,0,0.350)]">
        <Sidebar />
        <Main />
        <div className="absolute inset-x-0 top-0 h-[3px] bg-[linear-gradient(90deg,#ff4b4b,#fffd80)]" />
      </div>
      <Taskbar />
    </div>
  );
}
